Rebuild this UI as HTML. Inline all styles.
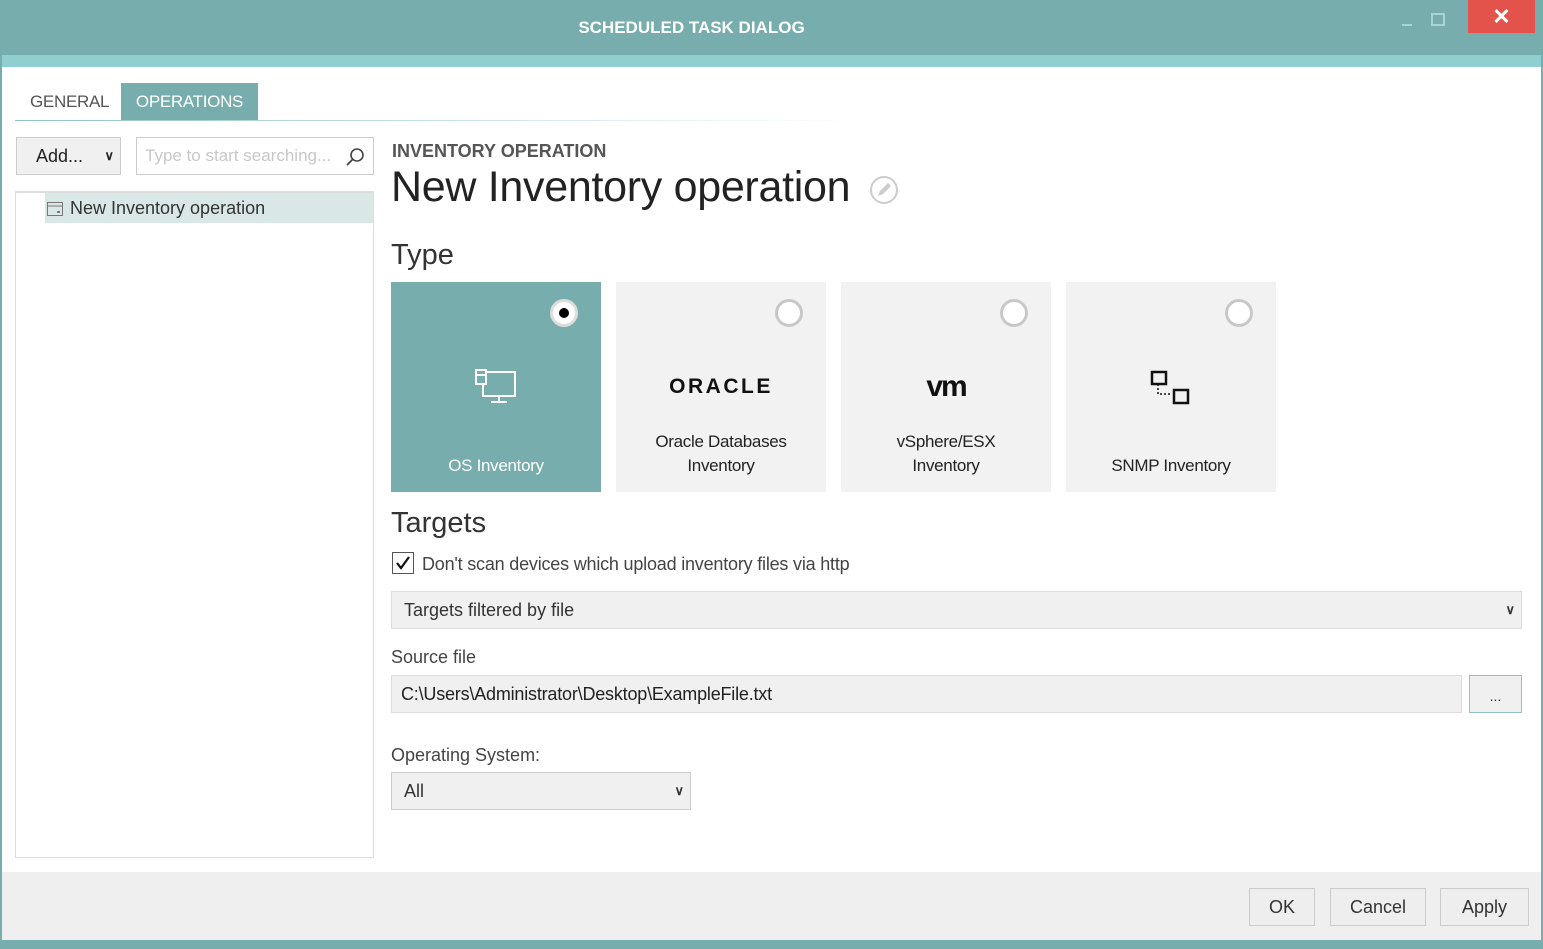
<!DOCTYPE html>
<html><head><meta charset="utf-8"><style>
*{box-sizing:border-box;margin:0;padding:0}
body{width:1543px;height:949px;overflow:hidden;background:#fff;font-family:"Liberation Sans",sans-serif;position:relative;color:#333}
.a{position:absolute}
.title{left:0;top:0;width:1543px;height:55px;background:#77aead}
.strip{left:0;top:55px;width:1543px;height:12px;background:#8fcfcf}
.lb{left:0;top:55px;width:2px;height:894px;background:#77aead}
.rb{right:0;top:55px;width:2px;height:894px;background:#77aead}
.bb{left:0;top:940px;width:1543px;height:9px;background:#77aead}
.foot{left:2px;top:872px;width:1539px;height:68px;background:#efefef}
.btn{background:#eee;border:1px solid #ccc;font-size:18px;color:#333;text-align:center;line-height:36px;height:38px}
.tile{top:282px;width:210px;height:210px;background:#f2f2f2;text-align:center;font-size:17px;color:#222}
.tile .lbl{position:absolute;left:0;width:100%;top:148px;line-height:24px;letter-spacing:-0.3px}
.rad{position:absolute;top:17px;width:28px;height:28px;border-radius:50%;border:3px solid #c8c8c8;background:#fff}
</style></head><body>
<div class="a title"></div>
<div class="a" style="left:0;top:18px;width:1383px;text-align:center;color:#fff;font-weight:bold;font-size:17px">SCHEDULED TASK DIALOG</div>
<div class="a" style="left:1402px;top:24px;width:10px;height:2px;background:#a8d4d4"></div>
<div class="a" style="left:1431px;top:13px;width:14px;height:13px;border:2px solid #a8d4d4"></div>
<div class="a" style="left:1468px;top:0;width:67px;height:33px;background:#e4534b;color:#fff;font-size:22px;font-weight:bold;text-align:center;line-height:33px">✕</div>
<div class="a strip"></div><div class="a lb"></div><div class="a rb"></div>

<div class="a" style="left:30px;top:92px;font-size:17px;color:#555;letter-spacing:-0.3px">GENERAL</div>
<div class="a" style="left:121px;top:83px;width:137px;height:38px;background:#77aead;color:#fff;font-size:17px;text-align:center;line-height:38px;letter-spacing:-0.3px">OPERATIONS</div>
<div class="a" style="left:15px;top:120px;width:840px;height:1px;background:linear-gradient(90deg,#8fc3c3,#fff)"></div>

<div class="a" style="left:16px;top:137px;width:105px;height:38px;background:#f0f0f0;border:1px solid #ccc;font-size:18px;line-height:36px;padding-left:19px;color:#222">Add...<span style="position:absolute;right:6px;top:0;font-size:13px;font-weight:bold">&#x2228;</span></div>
<div class="a" style="left:136px;top:137px;width:238px;height:38px;border:1px solid #ccc;font-size:17px;line-height:36px;padding-left:8px;color:#c8c8c8">Type to start searching...</div>
<svg class="a" style="left:345px;top:146px" width="22" height="22"><circle cx="12" cy="9" r="6" fill="none" stroke="#444" stroke-width="1.6"/><line x1="8" y1="13" x2="2" y2="19" stroke="#444" stroke-width="1.8"/></svg>
<div class="a" style="left:15px;top:191px;width:359px;height:667px;border:1px solid #ddd;border-top:2px solid #ddd"></div>
<div class="a" style="left:45px;top:193px;width:328px;height:30px;background:#d9e7e6"></div>
<svg class="a" style="left:46px;top:199px" width="18" height="18"><rect x="1.5" y="3.5" width="15" height="13" fill="none" stroke="#777"/><line x1="1.5" y1="7" x2="16.5" y2="7" stroke="#777"/><rect x="11" y="12" width="3" height="2" fill="#777"/></svg>
<div class="a" style="left:70px;top:198px;font-size:18px;color:#333">New Inventory operation</div>

<div class="a" style="left:392px;top:141px;font-size:18px;font-weight:bold;color:#555">INVENTORY OPERATION</div>
<div class="a" style="left:391px;top:163px;font-size:43px;color:#222;letter-spacing:-0.3px">New Inventory operation</div>
<svg class="a" style="left:868px;top:174px" width="32" height="32"><circle cx="16" cy="16" r="13" fill="none" stroke="#ccc" stroke-width="2"/><path d="M10 22 L12 17 L20 9 L23 12 L15 20 Z" fill="#ccc"/></svg>
<div class="a" style="left:391px;top:239px;font-size:29px;color:#333">Type</div>

<div class="a tile" style="left:391px;background:#77aead;color:#fff">
<div class="rad" style="left:159px;border-color:#ddd;background:#fff"><div style="position:absolute;left:6px;top:6px;width:10px;height:10px;border-radius:50%;background:#000"></div></div>
<svg style="position:absolute;left:82px;top:86px" width="46" height="38" fill="none" stroke="#fff" stroke-width="2"><rect x="3" y="2" width="10" height="14"/><line x1="3" y1="7" x2="13" y2="7"/><path d="M13 4 H42 V28 H10 V16"/><line x1="26" y1="28" x2="26" y2="33"/><line x1="18" y1="34" x2="34" y2="34"/></svg>
<div class="lbl" style="top:172px">OS Inventory</div></div>

<div class="a tile" style="left:616px"><div class="rad" style="left:159px"></div>
<div style="position:absolute;left:0;width:100%;top:93px;font-size:21px;font-weight:bold;letter-spacing:2.5px;color:#111">ORACLE</div>
<div class="lbl">Oracle Databases<br>Inventory</div></div>

<div class="a tile" style="left:841px"><div class="rad" style="left:159px"></div>
<div style="position:absolute;left:0;width:100%;top:88px;font-size:30px;font-weight:bold;letter-spacing:-2px;color:#111">vm</div>
<div class="lbl">vSphere/ESX<br>Inventory</div></div>

<div class="a tile" style="left:1066px"><div class="rad" style="left:159px"></div>
<svg style="position:absolute;left:84px;top:88px" width="42" height="38" fill="none" stroke="#111" stroke-width="2.5"><rect x="2" y="2" width="14" height="12"/><path d="M8 14 V24 H22" stroke-width="1.5" stroke-dasharray="2 2"/><rect x="24" y="20" width="14" height="13"/></svg>
<div class="lbl" style="top:172px">SNMP Inventory</div></div>

<div class="a" style="left:391px;top:507px;font-size:29px;color:#333">Targets</div>
<div class="a" style="left:392px;top:552px;width:22px;height:22px;border:1px solid #555;background:#fff"></div>
<svg class="a" style="left:394px;top:554px" width="18" height="18"><path d="M3 9 L7 14 L15 3" fill="none" stroke="#111" stroke-width="2.2"/></svg>
<div class="a" style="left:422px;top:554px;font-size:18px;color:#444;letter-spacing:-0.2px">Don't scan devices which upload inventory files via http</div>
<div class="a" style="left:391px;top:591px;width:1131px;height:38px;background:#f0f0f0;border:1px solid #ddd;font-size:18px;line-height:36px;padding-left:12px;color:#333">Targets filtered by file<span style="position:absolute;right:6px;top:0;font-size:13px;font-weight:bold">&#x2228;</span></div>
<div class="a" style="left:391px;top:647px;font-size:18px;color:#444">Source file</div>
<div class="a" style="left:391px;top:675px;width:1071px;height:38px;background:#f0f0f0;border:1px solid #ddd;font-size:18px;line-height:36px;padding-left:9px;color:#222;letter-spacing:-0.2px">C:\Users\Administrator\Desktop\ExampleFile.txt</div>
<div class="a" style="left:1469px;top:675px;width:53px;height:38px;background:#f0f0f0;border:1px solid #8fc3c3;font-size:14px;text-align:center;line-height:40px">...</div>
<div class="a" style="left:391px;top:745px;font-size:18px;color:#444">Operating System:</div>
<div class="a" style="left:391px;top:772px;width:300px;height:38px;background:#f0f0f0;border:1px solid #ccc;font-size:18px;line-height:36px;padding-left:12px;color:#333">All<span style="position:absolute;right:6px;top:0;font-size:13px;font-weight:bold">&#x2228;</span></div>

<div class="a foot"></div>
<div class="a btn" style="left:1249px;top:888px;width:66px">OK</div>
<div class="a btn" style="left:1330px;top:888px;width:96px">Cancel</div>
<div class="a btn" style="left:1440px;top:888px;width:89px">Apply</div>
<div class="a bb"></div>
</body></html>
